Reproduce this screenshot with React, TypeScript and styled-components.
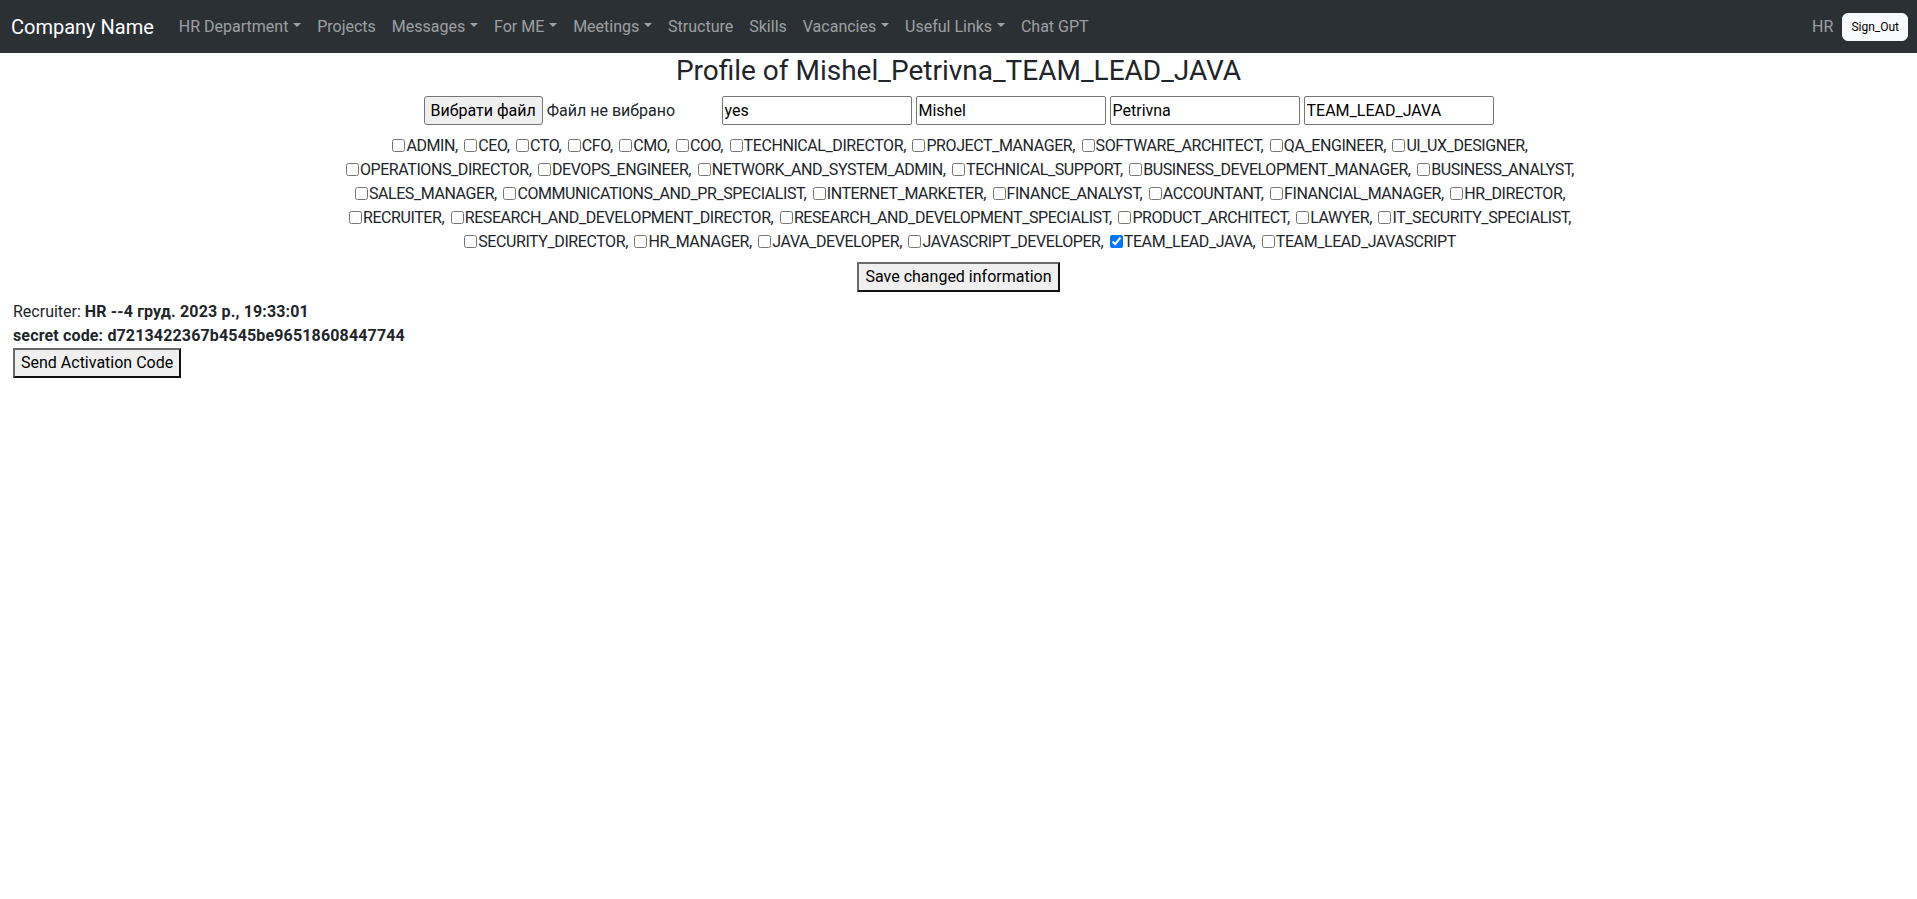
import React from "react";
import styled, { createGlobalStyle, css } from "styled-components";

const FONT = `Roboto, "Open Sans", Arial, sans-serif`;

const GlobalStyle = createGlobalStyle`
  *, *::before, *::after { box-sizing: border-box; }
  body {
    margin: 0;
    font-family: ${FONT};
    font-size: 16px;
    line-height: 1.5;
    color: #212529;
    background: #fff;
  }
`;

const Navbar = styled.nav`
  display: flex;
  align-items: center;
  height: 53px;
  padding: 0 9px 0 11px;
  background: #2b3035;
`;

const Brand = styled.a`
  color: #fff;
  font-size: 20px;
  margin-right: 17px;
  text-decoration: none;
  white-space: nowrap;
`;

const NavList = styled.ul`
  display: flex;
  flex: 1;
  margin: 0;
  padding: 0;
  list-style: none;
`;

const NavLink = styled.a<{ $dropdown?: boolean }>`
  display: block;
  padding: 8px;
  color: rgba(255, 255, 255, 0.55);
  text-decoration: none;
  white-space: nowrap;
  ${(p) =>
    p.$dropdown &&
    css`
      &::after {
        content: "";
        display: inline-block;
        margin-left: 0.3em;
        vertical-align: 0.255em;
        border-top: 0.3em solid;
        border-right: 0.3em solid transparent;
        border-left: 0.3em solid transparent;
      }
    `}
`;

const UserBox = styled.div`
  display: flex;
  align-items: center;
  gap: 9px;
  color: rgba(255, 255, 255, 0.55);
`;

const SignOut = styled.button`
  font-family: ${FONT};
  font-size: 12px;
  line-height: 1.5;
  padding: 4px 8px;
  border: 1px solid #f8f9fa;
  border-radius: 6px;
  background: #f8f9fa;
  color: #000;
`;

const Container = styled.main`
  max-width: 1320px;
  margin: 0 auto;
  padding: 0 12px;
  text-align: center;
`;

const Title = styled.h3`
  margin: 0;
  font-size: 28px;
  font-weight: 400;
  line-height: 35px;
`;

const FormRow = styled.div`
  display: flex;
  justify-content: center;
  align-items: center;
  gap: 4px;
  margin-top: 8px;
`;

const FilePicker = styled.div`
  display: flex;
  align-items: center;
  gap: 4px;
  width: 294px;
  text-align: left;
`;

const NativeButton = styled.button<{ $rounded?: boolean }>`
  font-family: ${FONT};
  font-size: 16px;
  line-height: 1.5;
  color: #000;
  background: #efefef;
  padding: 1px 6px;
  white-space: nowrap;
  ${(p) =>
    p.$rounded
      ? css`
          height: 29px;
          border: 1px solid #767676;
          border-radius: 3px;
        `
      : css`
          border-width: 2px;
          border-style: solid;
          border-color: #6a6a6a #111 #111 #6a6a6a;
          border-radius: 0;
        `}
`;

const TextInput = styled.input`
  width: 190px;
  height: 29px;
  padding: 1px 2px;
  font-family: ${FONT};
  font-size: 16px;
  color: #000;
  border: 1px solid #767676;
  border-radius: 2px;
`;

const Roles = styled.div`
  margin-top: 9px;
`;

const RoleLine = styled.div`
  white-space: nowrap;
  line-height: 24px;
  letter-spacing: -0.42px;
`;

const Check = styled.input`
  width: 13px;
  height: 13px;
  margin: 0 1px 0 3px;
  vertical-align: -1px;
`;

const SaveRow = styled.div`
  margin-top: 8px;
`;

const Details = styled.section`
  padding: 8px 13px 0;
  text-align: left;
`;

const Line = styled.div`
  line-height: 24px;
`;

const Strong = styled.b`
  font-weight: 700;
  letter-spacing: 0.15px;
`;

const navItems: { label: string; dropdown?: boolean }[] = [
  { label: "HR Department", dropdown: true },
  { label: "Projects" },
  { label: "Messages", dropdown: true },
  { label: "For ME", dropdown: true },
  { label: "Meetings", dropdown: true },
  { label: "Structure" },
  { label: "Skills" },
  { label: "Vacancies", dropdown: true },
  { label: "Useful Links", dropdown: true },
  { label: "Chat GPT" },
];

const roleLines: string[][] = [
  ["ADMIN", "CEO", "CTO", "CFO", "CMO", "COO", "TECHNICAL_DIRECTOR", "PROJECT_MANAGER", "SOFTWARE_ARCHITECT", "QA_ENGINEER", "UI_UX_DESIGNER"],
  ["OPERATIONS_DIRECTOR", "DEVOPS_ENGINEER", "NETWORK_AND_SYSTEM_ADMIN", "TECHNICAL_SUPPORT", "BUSINESS_DEVELOPMENT_MANAGER", "BUSINESS_ANALYST"],
  ["SALES_MANAGER", "COMMUNICATIONS_AND_PR_SPECIALIST", "INTERNET_MARKETER", "FINANCE_ANALYST", "ACCOUNTANT", "FINANCIAL_MANAGER", "HR_DIRECTOR"],
  ["RECRUITER", "RESEARCH_AND_DEVELOPMENT_DIRECTOR", "RESEARCH_AND_DEVELOPMENT_SPECIALIST", "PRODUCT_ARCHITECT", "LAWYER", "IT_SECURITY_SPECIALIST"],
  ["SECURITY_DIRECTOR", "HR_MANAGER", "JAVA_DEVELOPER", "JAVASCRIPT_DEVELOPER", "TEAM_LEAD_JAVA", "TEAM_LEAD_JAVASCRIPT"],
];

const lastRole = "TEAM_LEAD_JAVASCRIPT";

export default function App() {
  return (
    <>
      <GlobalStyle />
      <Navbar>
        <Brand href="#">Company Name</Brand>
        <NavList>
          {navItems.map((item) => (
            <li key={item.label}>
              <NavLink href="#" $dropdown={item.dropdown}>
                {item.label}
              </NavLink>
            </li>
          ))}
        </NavList>
        <UserBox>
          <span>HR</span>
          <SignOut>Sign_Out</SignOut>
        </UserBox>
      </Navbar>
      <Container>
        <Title>Profile of Mishel_Petrivna_TEAM_LEAD_JAVA</Title>
        <FormRow>
          <FilePicker>
            <NativeButton $rounded>Вибрати файл</NativeButton>
            <span>Файл не вибрано</span>
          </FilePicker>
          <TextInput defaultValue="yes" />
          <TextInput defaultValue="Mishel" />
          <TextInput defaultValue="Petrivna" />
          <TextInput defaultValue="TEAM_LEAD_JAVA" />
        </FormRow>
        <Roles>
          {roleLines.map((line, i) => (
            <RoleLine key={i}>
              {line.map((role) => (
                <React.Fragment key={role}>
                  <Check type="checkbox" defaultChecked={role === "TEAM_LEAD_JAVA"} />
                  {role}
                  {role === lastRole ? "" : ", "}
                </React.Fragment>
              ))}
            </RoleLine>
          ))}
        </Roles>
        <SaveRow>
          <NativeButton>Save changed information</NativeButton>
        </SaveRow>
      </Container>
      <Details>
        <Line>
          Recruiter: <Strong>HR --4 груд. 2023 р., 19:33:01</Strong>
        </Line>
        <Line>
          <Strong>secret code: d7213422367b4545be96518608447744</Strong>
        </Line>
        <NativeButton>Send Activation Code</NativeButton>
      </Details>
    </>
  );
}
